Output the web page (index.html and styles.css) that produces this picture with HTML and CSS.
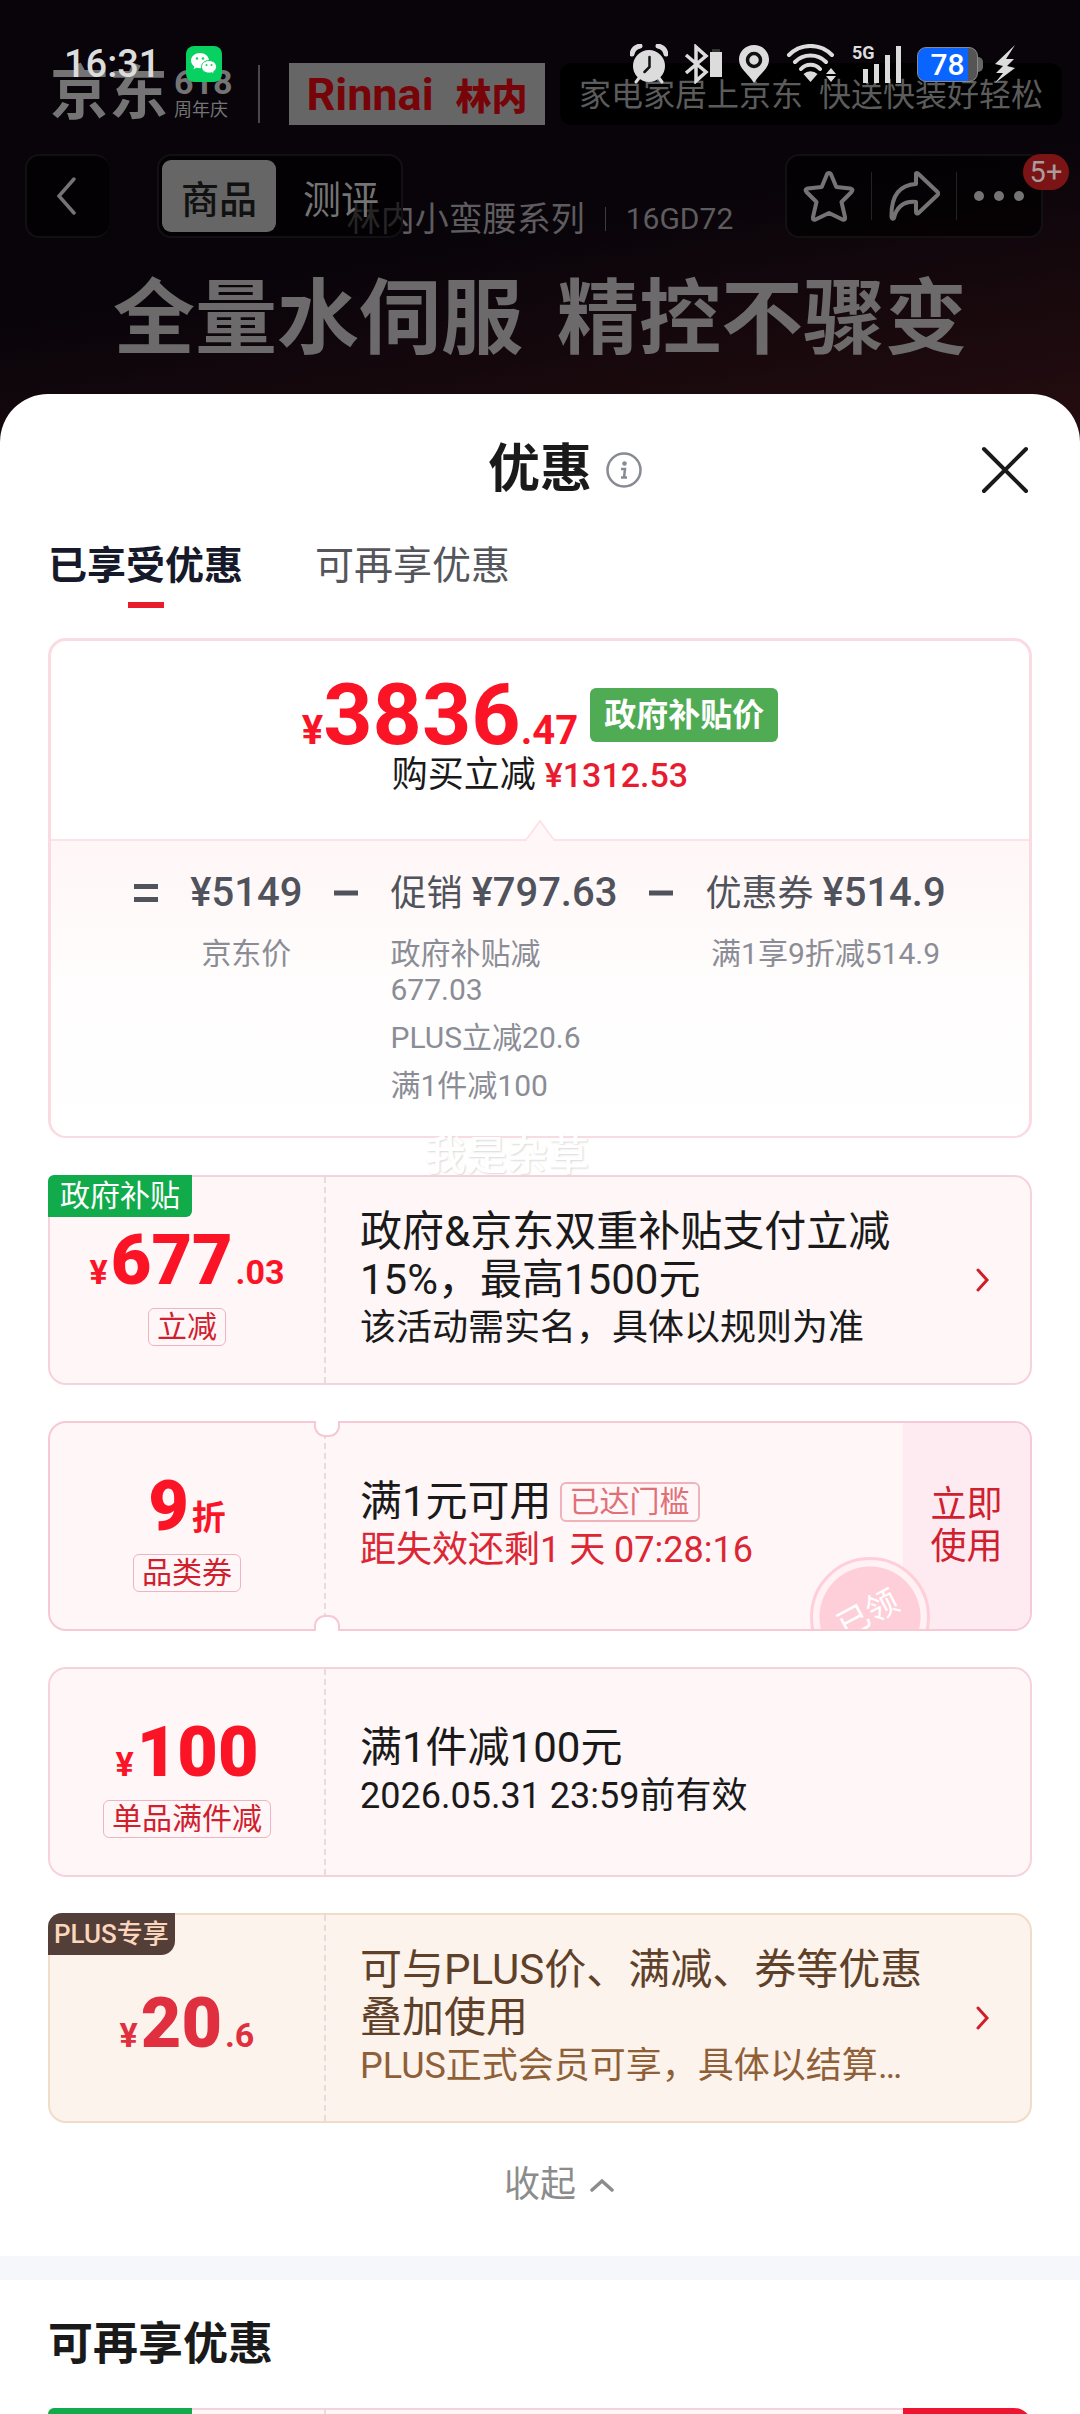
FILE: index.html
```html
<!DOCTYPE html>
<html lang="zh-CN">
<head>
  <meta charset="UTF-8">
  <title>优惠</title>
  <meta name="viewport" content="width=device-width, initial-scale=1.0">
  <link rel="stylesheet" href="styles.css">
</head>
<body>
  <div class="hero">
    <div class="banner">
      <div class="logo">
        <span class="logo-name">京东</span>
        <span class="logo-side">
          <b>618</b>
          <small>周年庆</small>
        </span>
      </div>
      <span class="banner-line"></span>
      <div class="brand"><span>Rinnai</span><span class="brand-cn">林内</span></div>
      <div class="slogan">家电家居上京东&nbsp; 快送快装好轻松</div>
    </div>
    <p class="series"><span>林内小蛮腰系列</span><i></i><span class="model">16GD72</span></p>
    <h2 class="hero-title"><span>全量水伺服</span><span>精控不骤变</span></h2>

    <div class="status-bar">
      <span class="time">16:31</span>
      <svg class="wechat" width="36" height="36" viewBox="0 0 36 36">
        <rect width="36" height="36" rx="8" fill="#07d160"/>
        <path d="M14 7c-5 0-9 3.400-9 7.600 0 2.400 1.300 4.500 3.300 5.900l-.8 2.700 3-1.500c1.100.3 2.300.5 3.500.5 5 0 9-3.400 9-7.600S19 7 14 7z" fill="#fff"/>
        <path d="M23 14.500c-4.300 0-7.500 2.800-7.500 6.300s3.200 6.300 7.500 6.300c1 0 2-.2 2.800-.4l2.500 1.300-.7-2.300c1.800-1.200 2.900-2.900 2.900-4.900 0-3.500-3.200-6.300-7.500-6.300z" fill="#fff" stroke="#07d160"/>
        <g fill="#07d160"><circle cx="11" cy="12.500" r="1.200"/><circle cx="17" cy="12.500" r="1.200"/><circle cx="20.500" cy="19" r="1"/><circle cx="25.500" cy="19" r="1"/></g>
      </svg>
      <div class="status-icons">
        <svg width="38" height="40" viewBox="0 0 38 40">
          <circle cx="19" cy="22" r="16" fill="#dcdcdc"/>
          <path d="M2 10a10 10 0 0 1 8-8M36 10a10 10 0 0 0-8-8" stroke="#dcdcdc" stroke-width="5" stroke-linecap="round" fill="none"/>
          <path d="M9 34l-3 4M29 34l3 4" stroke="#dcdcdc" stroke-width="3" stroke-linecap="round"/>
          <path d="M19.500 13v10l-5 5" stroke="#111" stroke-width="2.500" stroke-linecap="round" fill="none"/>
        </svg>
        <svg width="38" height="40" viewBox="0 0 38 40">
          <path d="M2 11l20 17-10 9V3l10 9L2 29" fill="none" stroke="#dcdcdc" stroke-width="3.500"/>
          <path d="M26 8h12v25H26z" fill="#dcdcdc"/><path d="M28 5h8v3h-8z" fill="#333"/>
        </svg>
        <svg width="32" height="40" viewBox="0 0 32 40">
          <path d="M16 1C7.500 1 1 7.500 1 15.500 1 25 10 29 16 39c6-10 15-14 15-23.500C31 7.500 24.500 1 16 1z" fill="#dcdcdc"/>
          <circle cx="16" cy="16" r="6.500" fill="none" stroke="#111" stroke-width="3.500"/>
        </svg>
        <svg width="50" height="40" viewBox="0 0 50 40">
          <g fill="none" stroke="#dcdcdc" stroke-width="4" stroke-linecap="round">
            <path d="M3 11a30 30 0 0 1 43 0M9 18a22 22 0 0 1 31 0M15 25a13 13 0 0 1 19 0"/>
          </g>
          <path d="M24.500 38l-7-8a10 10 0 0 1 14 0z" fill="#dcdcdc"/>
          <path d="M40 30l5-6 5 6zM40 32l5 6 5-6z" fill="#dcdcdc"/>
        </svg>
        <span class="signal">
          <b>5G</b>
          <svg width="40" height="40" viewBox="0 0 40 40">
            <path d="M2 25h5v14H2zM13 20h5v19h-5zM24 11h5v28h-5zM35 2h5v37h-5z" fill="#dcdcdc"/>
          </svg>
        </span>
        <span class="battery">78</span>
        <svg width="22" height="38" viewBox="0 0 22 38">
          <path d="M21 0L1 19l8 2-7 7h7L1 38l20-15-8-2 7-7h-8z" fill="#dcdcdc"/>
        </svg>
      </div>
    </div>

    <nav class="top-nav">
      <button class="nav-box back" aria-label="返回">
        <svg width="20" height="38" viewBox="0 0 20 38"><path d="M18 2L3 19l15 17" fill="none" stroke="#747474" stroke-width="3.500" stroke-linecap="round"/></svg>
      </button>
      <div class="nav-box nav-tabs">
        <button class="nav-tab active">商品</button>
        <button class="nav-tab">测评</button>
      </div>
      <div class="nav-box nav-actions">
        <button aria-label="收藏">
          <svg width="52" height="52" viewBox="0 0 52 52"><path d="M26 3q1.500 0 2.300 2l5 12 14 1.500q3.500.7 1.200 3.500L38.500 32l3.500 15q.5 3.500-2.500 2.500L26 43l-13.500 6.500q-3 1-2.500-2.500l3.500-15L3.500 22q-2.300-2.800 1.200-3.500L18.700 17l5-12Q24.500 3 26 3z" fill="none" stroke="#747474" stroke-width="4" stroke-linejoin="round"/></svg>
        </button>
        <i></i>
        <button aria-label="分享">
          <svg width="52" height="52" viewBox="0 0 52 52"><path d="M28 3.500q1-1 2.500.5l19 18q1.500 1.500 0 3l-19 18q-2.500 1.500-2.500-1V32C17 31 9 36 6 48q-2 2-2.500-1C3 26 11 15 28 14z" fill="none" stroke="#747474" stroke-width="4" stroke-linejoin="round"/></svg>
        </button>
        <i></i>
        <button aria-label="更多">
          <svg width="52" height="12" viewBox="0 0 52 12"><g fill="#747474"><circle cx="6" cy="6" r="5"/><circle cx="26" cy="6" r="5"/><circle cx="46" cy="6" r="5"/></g></svg>
        </button>
        <span class="badge">5+</span>
      </div>
    </nav>
  </div>

  <main class="sheet">
    <header class="sheet-header">
      <h1>优惠</h1>
      <button class="info" aria-label="说明">
        <svg width="36" height="36" viewBox="0 0 36 36"><circle cx="18" cy="18" r="16.500" fill="none" stroke="#888b94" stroke-width="2.500"/><circle cx="18.500" cy="11.500" r="2.300" fill="#888b94"/><path d="M15 17h4l-1 8.500M15 25.500h6" fill="none" stroke="#888b94" stroke-width="2.500"/></svg>
      </button>
      <button class="close" aria-label="关闭">
        <svg width="48" height="48" viewBox="0 0 48 48"><path d="M3 3l42 42M45 3L3 45" stroke="#1a1a1a" stroke-width="4" stroke-linecap="round"/></svg>
      </button>
    </header>

    <div class="tabs">
      <button class="tab active">已享受优惠</button>
      <button class="tab">可再享优惠</button>
    </div>

    <section class="summary">
      <div class="price-row">
        <span class="price"><small>¥</small><b>3836</b><small>.47</small></span>
        <span class="price-tag">政府补贴价</span>
      </div>
      <p class="saved">购买立减 <b>¥1312.53</b></p>
      <div class="formula">
        <svg class="formula-arrow" width="30" height="22" viewBox="0 0 30 22"><path d="M1 21L15 2l14 19" fill="#fff7f8" stroke="#fde3e9" stroke-width="2"/><path d="M2 20h26v2H2z" fill="#fff7f8"/></svg>
        <span class="sign">
          <svg width="24" height="18" viewBox="0 0 24 18"><path d="M0 2.500h24M0 15.500h24" stroke="#50535b" stroke-width="5"/></svg>
        </span>
        <div class="term center">
          <p class="term-main"><b>¥5149</b></p>
          <ul><li>京东价</li></ul>
        </div>
        <span class="sign">
          <svg width="24" height="6" viewBox="0 0 24 6"><path d="M0 3h24" stroke="#50535b" stroke-width="5"/></svg>
        </span>
        <div class="term">
          <p class="term-main">促销 <b>¥797.63</b></p>
          <ul>
            <li>政府补贴减677.03</li>
            <li>PLUS立减20.6</li>
            <li>满1件减100</li>
          </ul>
        </div>
        <span class="sign">
          <svg width="24" height="6" viewBox="0 0 24 6"><path d="M0 3h24" stroke="#50535b" stroke-width="5"/></svg>
        </span>
        <div class="term center">
          <p class="term-main">优惠券 <b>¥514.9</b></p>
          <ul><li>满1享9折减514.9</li></ul>
        </div>
      </div>
      <span class="watermark">我是杂草</span>
    </section>

    <section class="coupons">
      <article class="coupon">
        <span class="corner green">政府补贴</span>
        <div class="amount">
          <p class="money"><small>¥</small><b>677</b><small>.03</small></p>
          <span class="kind">立减</span>
        </div>
        <div class="detail">
          <h3>政府&amp;京东双重补贴支付立减15%，最高1500元</h3>
          <p>该活动需实名，具体以规则为准</p>
        </div>
        <a class="more" href="#" aria-label="详情"><svg width="14" height="24" viewBox="0 0 14 24"><path d="M2 2l9 10-9 10" fill="none" stroke="#cf1f2b" stroke-width="3" stroke-linecap="round"/></svg></a>
      </article>

      <article class="coupon ticket">
        <div class="amount">
          <p class="money"><b>9</b><small>折</small></p>
          <span class="kind">品类券</span>
        </div>
        <div class="detail">
          <h3>满1元可用<span class="reached">已达门槛</span></h3>
          <p class="countdown">距失效还剩1 天 07:28:16</p>
        </div>
        <button class="use">立即<br>使用</button>
        <div class="stamp-clip"><span class="stamp"><em>已领</em></span></div>
      </article>

      <article class="coupon">
        <div class="amount">
          <p class="money"><small>¥</small><b>100</b></p>
          <span class="kind">单品满件减</span>
        </div>
        <div class="detail">
          <h3>满1件减100元</h3>
          <p>2026.05.31 23:59前有效</p>
        </div>
      </article>

      <article class="coupon plus">
        <span class="corner brown">PLUS专享</span>
        <div class="amount">
          <p class="money"><small>¥</small><b>20</b><small>.6</small></p>
        </div>
        <div class="detail">
          <h3>可与PLUS价、满减、券等优惠叠加使用</h3>
          <p>PLUS正式会员可享，具体以结算页为准</p>
        </div>
        <a class="more" href="#" aria-label="详情"><svg width="14" height="24" viewBox="0 0 14 24"><path d="M2 2l9 10-9 10" fill="none" stroke="#cf1f2b" stroke-width="3" stroke-linecap="round"/></svg></a>
      </article>
    </section>

    <button class="collapse">收起
      <svg width="24" height="14" viewBox="0 0 24 14"><path d="M2 12L12 3l10 9" fill="none" stroke="#8c8c8c" stroke-width="3.500" stroke-linecap="round"/></svg>
    </button>

    <section class="next">
      <h2>可再享优惠</h2>
      <article class="coupon">
        <span class="corner green"></span>
        <div class="amount"></div>
        <div class="detail"></div>
        <span class="grab"></span>
      </article>
    </section>
  </main>
</body>
</html>
```
FILE: styles.css
```css
:root {
  --red: #fa1426;
  --dark-red: #d0202e;
  --pink-line: #f6d3dc;
  --pink-bg: #fff6f7;
  --green: #12ab4b;
  --text: #1a1a1a;
  --side: 48px;
}
* {
  box-sizing: border-box;
  margin: 0;
  padding: 0;
}
body {
  height: 100vh;
  overflow: hidden;
  background: #170a0d;
  color: var(--text);
  font-family: Roboto, "Noto Sans CJK SC", sans-serif;
}
button {
  background: none;
  border: none;
  color: inherit;
  font-family: inherit;
  cursor: pointer;
}
svg {
  display: block;
  flex: none;
}
ul {
  list-style: none;
}

/* Dimmed product page behind the sheet */
.hero {
  position: relative;
  height: 442px;
  padding-top: 63px;
  background: linear-gradient(170deg, #08040a 0%, #08040a 50%, #260d10 100%);
  color: #747474;
}
.banner {
  display: flex;
  align-items: center;
  height: 62px;
  padding: 0 18px 0 50px;
}
.logo {
  display: flex;
  align-items: center;
  gap: 6px;
  width: 208px;
}
.logo-name {
  font-size: 59px;
  line-height: 62px;
  font-weight: 700;
}
.logo-side b {
  display: block;
  font-size: 34px;
  line-height: 32px;
}
.logo-side small {
  display: block;
  font-size: 18px;
  line-height: 24px;
}
.banner-line {
  width: 2px;
  height: 58px;
  background: #4a484a;
}
.brand {
  display: flex;
  align-items: center;
  justify-content: center;
  gap: 22px;
  width: 256px;
  height: 62px;
  margin: 0 15px 0 29px;
  background: #666;
  color: #770408;
  font-size: 45px;
  font-weight: 700;
}
.brand-cn {
  font-size: 36px;
  font-weight: 900;
}
.slogan {
  flex: 1;
  height: 62px;
  border-radius: 12px;
  background: #000;
  color: #5c5c5c;
  font-size: 32px;
  line-height: 64px;
  text-align: center;
  white-space: nowrap;
}
.series {
  display: flex;
  align-items: center;
  justify-content: center;
  gap: 20px;
  margin-top: 70px;
  color: #5e5c5e;
  font-size: 34px;
  line-height: 48px;
}
.series i {
  width: 1px;
  height: 24px;
  background: #3c3a3c;
}
.model {
  font-size: 30px;
}
.hero-title {
  display: flex;
  justify-content: center;
  gap: 34px;
  margin-top: 28px;
  color: #6c6a6a;
  font-size: 82px;
  line-height: 96px;
  font-weight: 700;
}

/* Status bar */
.status-bar {
  position: absolute;
  top: 44px;
  left: 0;
  right: 0;
  display: flex;
  align-items: center;
  height: 40px;
  padding: 0 64px;
  color: #dcdcdc;
}
.time {
  font-size: 38px;
  font-weight: 500;
}
.wechat {
  margin-left: 26px;
}
.status-icons {
  display: flex;
  align-items: center;
  gap: 16px;
  margin-left: auto;
}
.signal {
  position: relative;
  padding-left: 9px;
}
.signal b {
  position: absolute;
  top: 0;
  left: 0;
  font-size: 18px;
  line-height: 18px;
}
.battery {
  position: relative;
  width: 61px;
  height: 35px;
  border: 1px solid #8a8a8a;
  border-radius: 9px;
  background: linear-gradient(90deg, #0a64ff 84%, #555 84%);
  color: #fff;
  font-size: 30px;
  line-height: 34px;
  font-weight: 500;
  text-align: center;
}
.battery::after {
  content: "";
  position: absolute;
  top: 9px;
  right: -6px;
  width: 5px;
  height: 15px;
  border-radius: 0 5px 5px 0;
  background: #666;
}

/* Floating navigation */
.top-nav {
  position: absolute;
  top: 154px;
  left: 0;
  right: 0;
  display: flex;
  padding: 0 37px 0 25px;
}
.nav-box {
  display: flex;
  align-items: center;
  height: 84px;
  border: 2px solid #121012;
  border-radius: 14px;
  background: rgba(0, 0, 0, 0.6);
}
.back {
  width: 84px;
  padding-left: 29px;
  border-right: none;
}
.nav-tabs {
  gap: 8px;
  margin-left: 48px;
  padding: 0 3px;
}
.nav-tab {
  width: 114px;
  height: 72px;
  border-radius: 9px;
  color: #747474;
  font-size: 38px;
}
.nav-tab.active {
  background: #666;
  color: #111;
  font-weight: 500;
}
.nav-actions {
  position: relative;
  gap: 16px;
  margin-left: auto;
  padding: 0 16px;
}
.nav-actions button {
  width: 52px;
}
.nav-actions i {
  width: 1px;
  height: 48px;
  background: #242224;
}
.badge {
  position: absolute;
  top: -2px;
  right: -28px;
  width: 46px;
  height: 36px;
  border-radius: 18px;
  background: #7c1416;
  color: #a89c9c;
  font-size: 29px;
  line-height: 36px;
  text-align: center;
}

/* Sheet */
.sheet {
  position: relative;
  margin-top: -48px;
  padding-top: 36px;
  border-radius: 48px 48px 0 0;
  background: #fff;
}
.sheet-header {
  display: grid;
  grid-template-columns: 1fr auto 1fr auto;
  align-items: center;
  height: 80px;
  padding: 0 51px;
}
.sheet-header h1 {
  grid-column: 2;
  font-size: 52px;
  line-height: 80px;
  font-weight: 700;
}
.sheet-header::before {
  content: "";
}
.info {
  justify-self: start;
  margin-left: 14px;
}
.close {
  width: 0;
  display: flex;
  justify-content: flex-end;
}
.tabs {
  display: flex;
  gap: 72px;
  margin: 32px 0 30px;
  padding: 0 var(--side);
}
.tab {
  position: relative;
  padding-bottom: 18px;
  color: #55565c;
  font-size: 39px;
  line-height: 48px;
}
.tab.active {
  color: #15192a;
  font-weight: 700;
}
.tab.active::after {
  content: "";
  position: absolute;
  bottom: 0;
  left: 50%;
  width: 36px;
  height: 6px;
  margin-left: -18px;
  background: #e81c2a;
}

/* Price summary */
.summary {
  position: relative;
  margin: 0 var(--side);
  border: 3px solid #fadbe2;
  border-bottom-width: 2px;
  border-radius: 18px;
  text-align: center;
}
.price-row {
  display: flex;
  align-items: center;
  justify-content: center;
  gap: 12px;
  padding-top: 38px;
}
.price {
  display: flex;
  align-items: baseline;
  height: 72px;
  color: var(--red);
  line-height: 72px;
}
.price b {
  font-size: 86px;
}
.price small {
  font-size: 40px;
  font-weight: 700;
}
.price-tag {
  padding: 0 14px;
  border-radius: 6px;
  background: #50ab55;
  color: #fff;
  font-size: 32px;
  line-height: 54px;
  font-weight: 700;
}
.saved {
  padding-bottom: 40px;
  font-size: 36px;
  line-height: 48px;
}
.saved b {
  color: #e81c2e;
  font-size: 34px;
  font-weight: 500;
}
.formula {
  position: relative;
  display: flex;
  justify-content: center;
  gap: 32px;
  padding: 28px 0 32px;
  border-top: 2px solid #fde3e9;
  border-radius: 0 0 16px 16px;
  background: linear-gradient(#fff6f7, #fffdfd 50%, #fff);
  color: #50535b;
}
.formula-arrow {
  position: absolute;
  top: -22px;
  left: 50%;
  margin-left: -15px;
}
.sign {
  display: flex;
  align-items: center;
  height: 48px;
}
.term-main {
  font-size: 36px;
  line-height: 48px;
  white-space: nowrap;
}
.term-main b {
  font-size: 40px;
  font-weight: 500;
}
/* notes wrap to the width of the amount above them */
.term ul {
  display: grid;
  gap: 12px;
  width: 0;
  min-width: 100%;
  margin-top: 18px;
  color: #8b8d96;
  font-size: 30px;
  line-height: 36px;
  text-align: left;
}
.term.center ul {
  text-align: center;
}
.watermark {
  position: absolute;
  top: 100%;
  left: 374px;
  color: #fff;
  font-size: 41px;
  line-height: 40px;
  font-weight: 500;
  text-shadow: 1px 1px 2px #d8d8d8;
}

/* Coupons */
.coupons {
  display: grid;
  grid-template-columns: minmax(0, 1fr);
  gap: 36px;
  padding: 37px var(--side) 0;
}
.coupon {
  position: relative;
  display: flex;
  min-height: 210px;
  border: 2px solid var(--pink-line);
  border-radius: 18px;
  background: var(--pink-bg);
}
.corner {
  position: absolute;
  top: -2px;
  left: -2px;
  height: 42px;
  border-radius: 6px 0;
  color: #fff;
  line-height: 42px;
}
.corner.green {
  min-width: 144px;
  padding: 0 12px;
  background: var(--green);
  font-size: 30px;
}
.corner.brown {
  padding: 0 6px;
  border-radius: 14px 0;
  background: #533f37;
  color: #fcd6bc;
  font-size: 26px;
  font-weight: 500;
}
.amount {
  flex: none;
  display: flex;
  flex-direction: column;
  align-items: center;
  justify-content: center;
  gap: 12px;
  width: 276px;
  padding-top: 10px;
  border-right: 2px dashed #e8dadd;
}
.money {
  display: flex;
  align-items: baseline;
  gap: 3px;
  height: 72px;
  color: var(--red);
  line-height: 72px;
}
.money b {
  font-size: 70px;
  font-weight: 900;
}
.money small {
  font-size: 34px;
  font-weight: 700;
}
.kind {
  padding: 0 8px;
  border: 1px solid #eeb4c0;
  border-radius: 6px;
  color: var(--dark-red);
  font-size: 30px;
  line-height: 36px;
}
.detail {
  flex: 1;
  min-width: 0;
  align-self: center;
  padding-left: 34px;
}
.detail h3 {
  display: flex;
  align-items: center;
  font-size: 42px;
  line-height: 48px;
  font-weight: 400;
}
.detail p {
  overflow: hidden;
  font-size: 36px;
  line-height: 48px;
  white-space: nowrap;
  text-overflow: ellipsis;
}
.more {
  display: flex;
  align-items: center;
  padding: 0 40px 0 50px;
}
.ticket {
  border-color: #f6c9d4;
}
.ticket .amount::before,
.ticket .amount::after {
  content: "";
  position: absolute;
  left: 264px;
  width: 22px;
  height: 14px;
  border: 2px solid #f6c9d4;
  background: #fff;
}
.ticket .amount::before {
  top: -2px;
  border-top: none;
  border-radius: 0 0 11px 11px;
}
.ticket .amount::after {
  bottom: -2px;
  border-bottom: none;
  border-radius: 11px 11px 0 0;
}
.reached {
  margin-left: 8px;
  padding: 0 8px;
  border: 2px solid #f0b3bc;
  border-radius: 6px;
  color: #e07078;
  font-size: 30px;
  line-height: 36px;
}
.detail .countdown {
  color: #dc2634;
}
.use {
  width: 127px;
  border-radius: 0 16px 16px 0;
  background: #feeaf1;
  color: var(--dark-red);
  font-size: 36px;
  line-height: 42px;
}
.stamp-clip {
  position: absolute;
  right: 100px;
  bottom: 0;
  width: 120px;
  height: 72px;
  overflow: hidden;
}
.stamp {
  display: flex;
  align-items: center;
  justify-content: center;
  width: 120px;
  height: 120px;
  border: 3px solid #ffcfd9;
  border-radius: 50%;
  background: radial-gradient(circle, #ffcfd9 50px, #fff1f4 51px);
}
.stamp em {
  padding-bottom: 14px;
  color: #fff;
  font-size: 32px;
  font-style: normal;
  transform: rotate(-28deg);
}
.plus {
  border-color: #f0dcc8;
  background: #fbf3ec;
}
.plus .money {
  color: #e0303f;
}
.plus h3 {
  color: #5f412a;
}
.plus .detail p {
  color: #8f6038;
}
.collapse {
  display: flex;
  align-items: center;
  justify-content: center;
  gap: 14px;
  width: 100%;
  padding: 38px 0 47px 38px;
  color: #8c8c8c;
  font-size: 36px;
  line-height: 48px;
}

/* Offers still available */
.next {
  padding: 33px var(--side) 0;
  border-top: 24px solid #f5f7fb;
}
.next h2 {
  margin-bottom: 31px;
  font-size: 45px;
  line-height: 64px;
}
.grab {
  width: 129px;
  margin: -2px -2px -2px 0;
  border-radius: 0 18px 18px 0;
  background: #ef1530;
}
```
